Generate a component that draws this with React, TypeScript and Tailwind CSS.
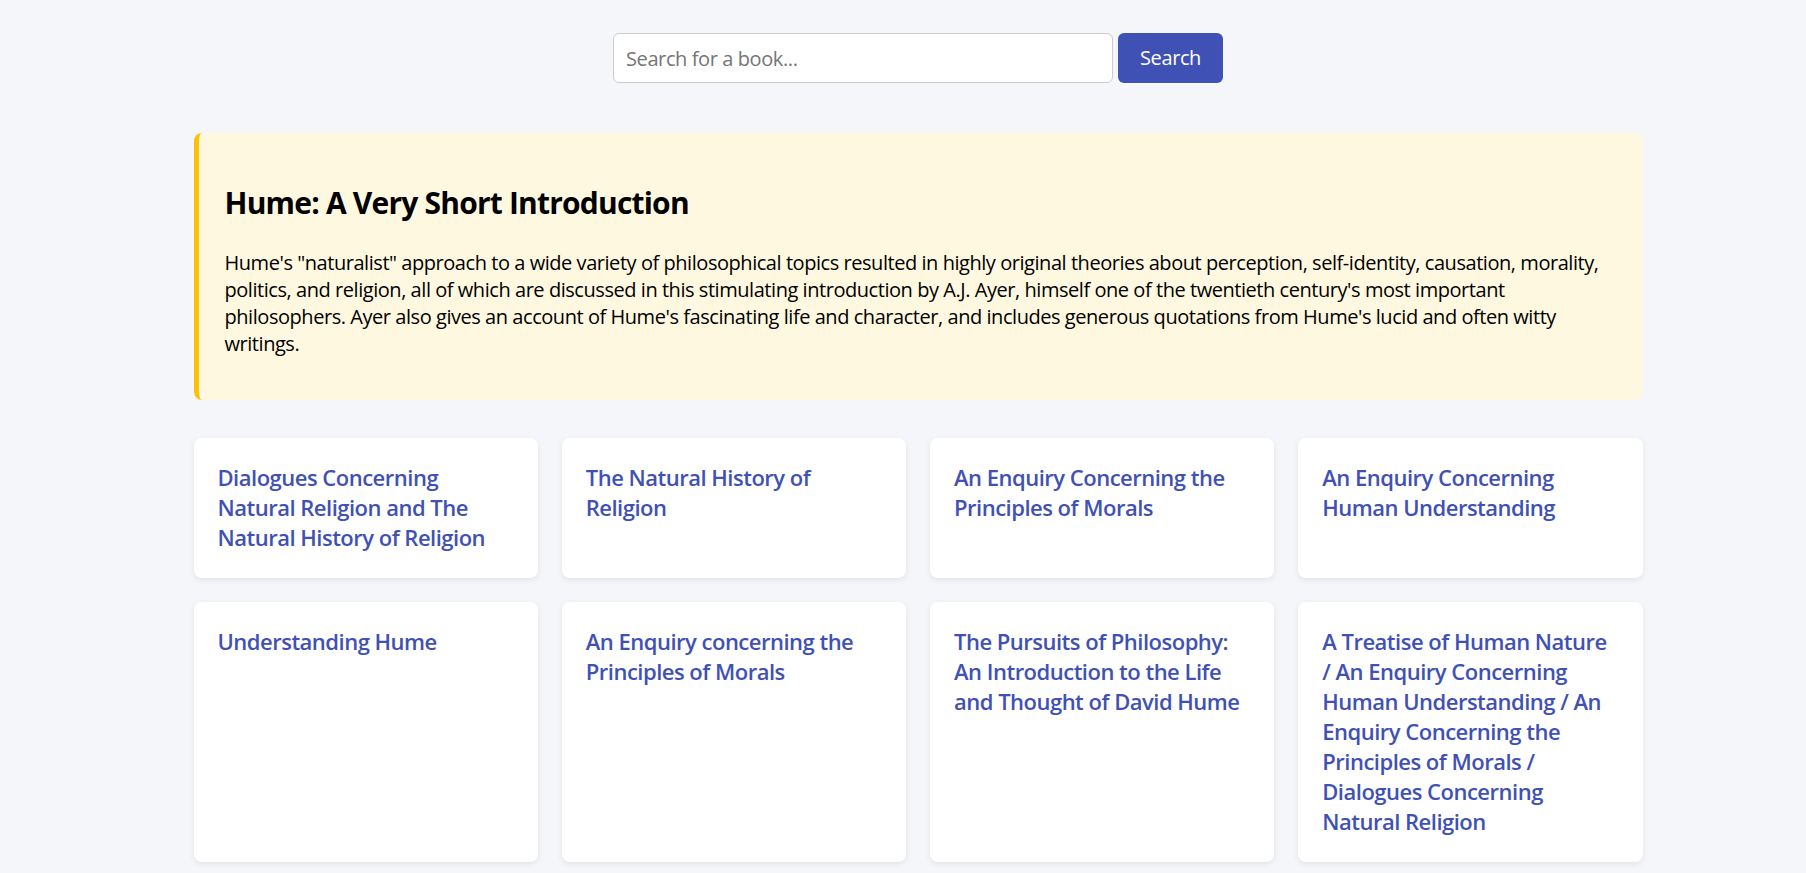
import { useState } from "react";

const books = [
  "Dialogues Concerning Natural Religion and The Natural History of Religion",
  "The Natural History of Religion",
  "An Enquiry Concerning the Principles of Morals",
  "An Enquiry Concerning Human Understanding",
  "Understanding Hume",
  "An Enquiry concerning the Principles of Morals",
  "The Pursuits of Philosophy: An Introduction to the Life and Thought of David Hume",
  "A Treatise of Human Nature / An Enquiry Concerning Human Understanding / An Enquiry Concerning the Principles of Morals / Dialogues Concerning Natural Religion",
];

const App = () => {
  const [query, setQuery] = useState("");

  return (
    <div className="min-h-screen bg-[#f5f6fa] pl-[30px] font-['Open_Sans',sans-serif] text-black">
      <div className="mx-auto max-w-[1449px] pt-[33px] pb-10">
        <form
          className="flex justify-center gap-[5px]"
          onSubmit={(e) => e.preventDefault()}
        >
          <input
            value={query}
            onChange={(e) => setQuery(e.target.value)}
            placeholder="Search for a book..."
            className="h-[50px] w-[500px] rounded-md border border-[#cccccc] bg-white px-3 text-[20px] tracking-[-0.4px] text-black outline-none placeholder:text-[#757575]"
          />
          <button
            type="submit"
            className="h-[50px] w-[105px] rounded-md bg-[#3f51b5] text-[20px] tracking-[-0.4px] text-white"
          >
            Search
          </button>
        </form>

        <section className="mt-[50px] rounded-lg border-l-[5px] border-[#ffc107] bg-[#fff8e1] px-[26px] pt-[50px] pb-[43px]">
          <h2 className="text-[30px] font-bold leading-[40px] tracking-[-0.8px]">
            Hume: A Very Short Introduction
          </h2>
          <p className="mt-[26px] text-[20px] leading-[27px] tracking-[-0.45px]">
            Hume's "naturalist" approach to a wide variety of philosophical topics resulted in highly
            original theories about perception, self-identity, causation, morality, politics, and
            religion, all of which are discussed in this stimulating introduction by A.J. Ayer, himself
            one of the twentieth century's most important philosophers. Ayer also gives an account of
            Hume's fascinating life and character, and includes generous quotations from Hume's lucid
            and often witty writings.
          </p>
        </section>

        <div className="mt-[38px] grid grid-cols-4 gap-6">
          {books.map((title, index) => (
            <div
              key={index}
              className="rounded-lg bg-white px-6 pt-6 pb-[26px] shadow-[0_2px_6px_rgba(0,0,0,0.08)]"
            >
              <h3 className="text-[22px] font-semibold leading-[30px] tracking-[-0.5px] text-[#3f51b5]">
                {title}
              </h3>
            </div>
          ))}
        </div>
      </div>
    </div>
  );
};

export default App;
